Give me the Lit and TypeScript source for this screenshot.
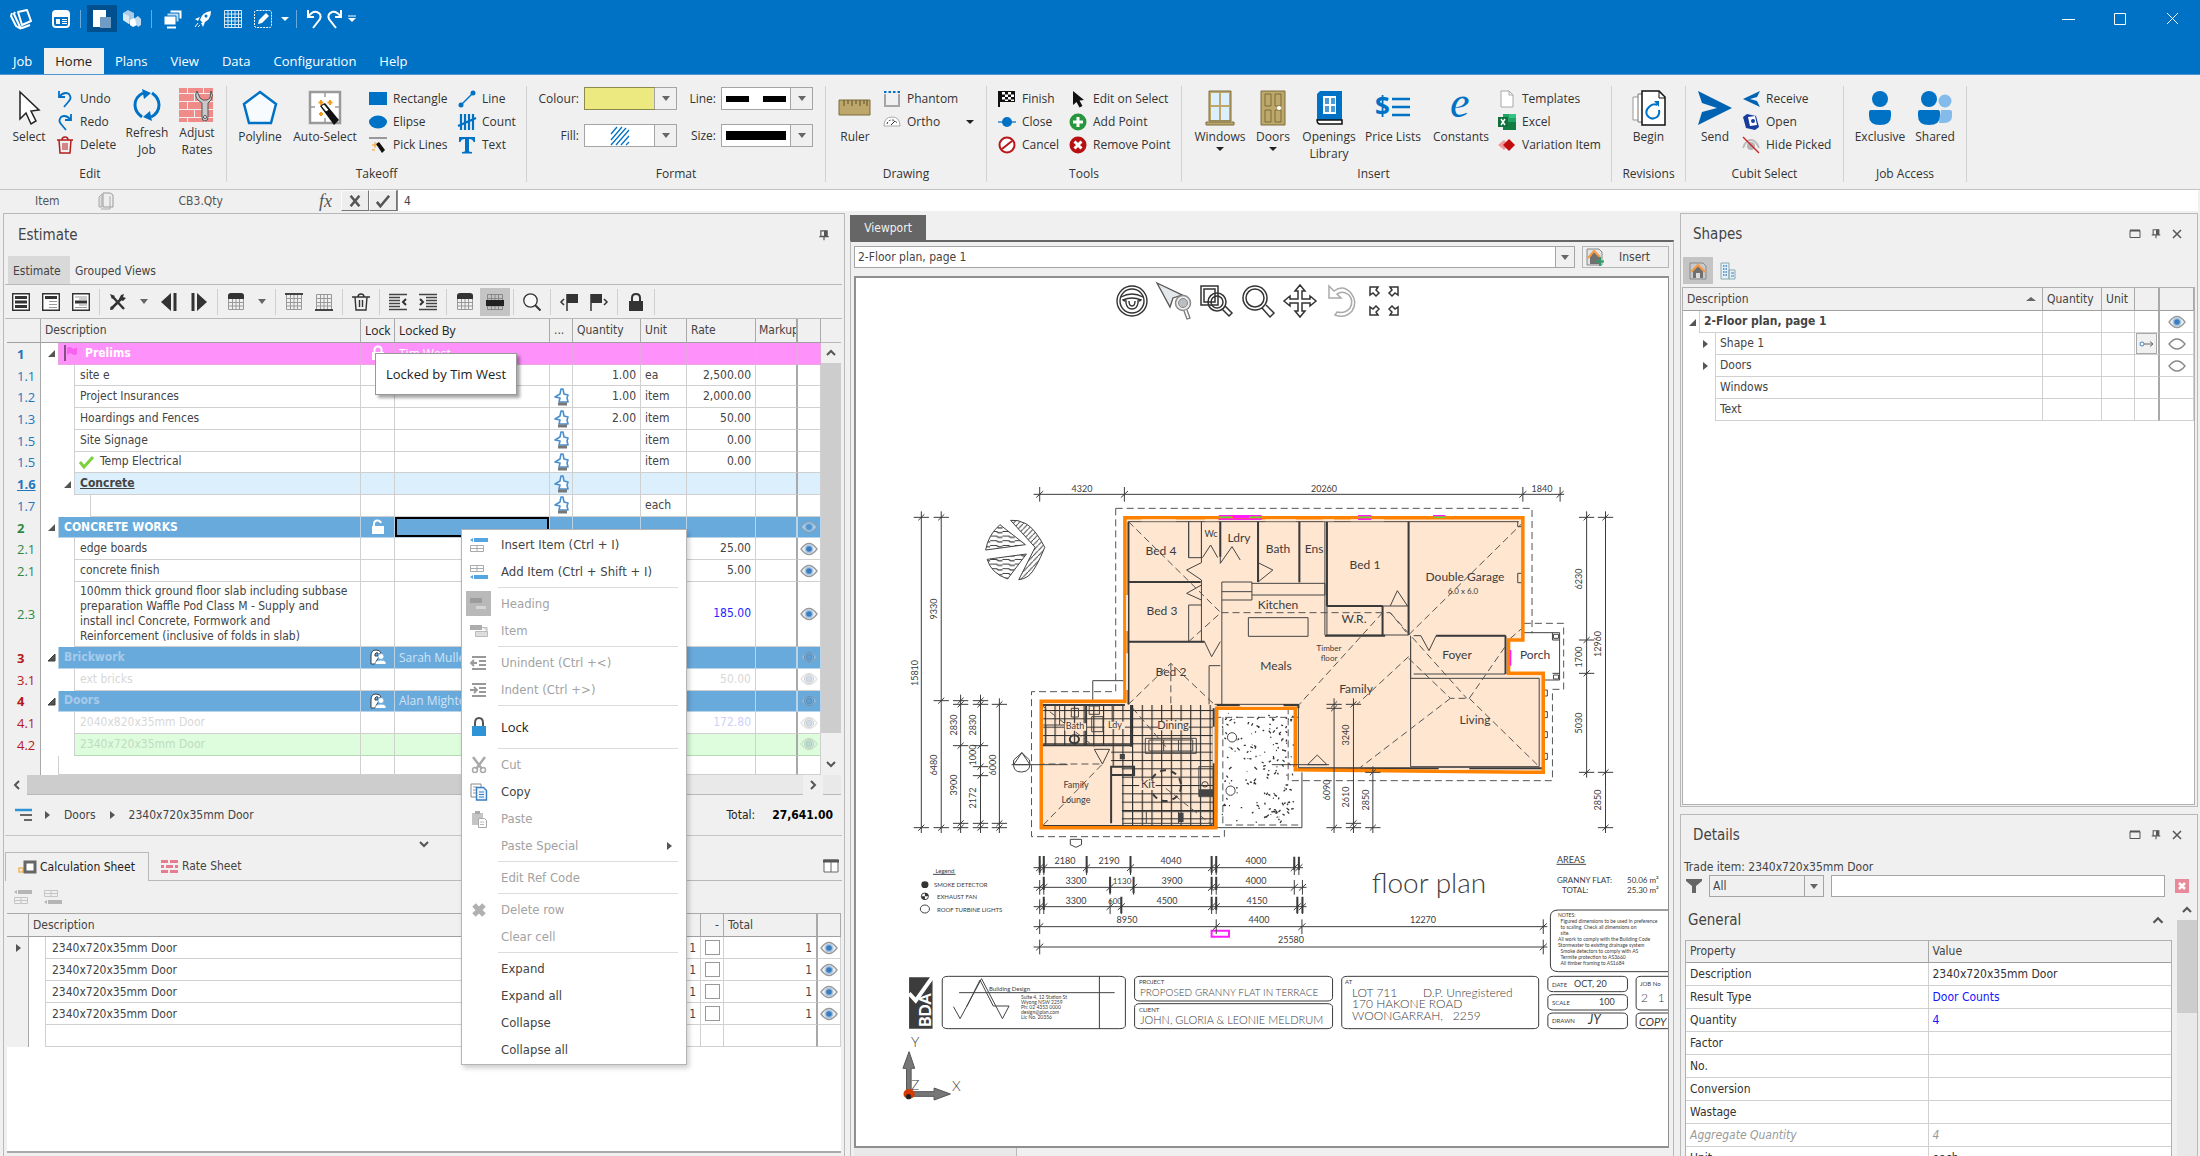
import { LitElement, html, svg, css, nothing } from "lit";
import { customElement } from "lit/decorators.js";

const BLUE = "#0072c6";

/* ---------- icon set: name -> [viewBox width, viewBox height, drawing] ---------- */
const tri = svg`<path d="M0 0h8L4 4z" fill="#222"/>`;
const grid16 = (c: string) => svg`<path d="M1.5 1.5h15v15h-15zM1.5 5.5h15M1.5 9.5h15M1.5 13h15M5.5 1.5v15M9 1.5v15M12.500 1.500v15" fill="none" stroke="${c}"/>`;
const insertRow = (c: string, g: string) => svg`<path d="M0 4l3-2v4zM4 2h14v4H4z" fill="${c}"/><path d="M.5 9.500h13v6H.5zM.5 12.500h13M7 9.500v6" fill="none" stroke="${g}"/>`;
const addRow = (c: string, g: string) => svg`<path d="M0 14l3-2v4zM4 12h14v4H4z" fill="${c}"/><path d="M.5 2.500h13v6H.5zM.5 5.500h13M7 2.500v6" fill="none" stroke="${g}"/>`;
const bricks = (c: string) => svg`<path d="M0 0h8v5H0zM9 0h15v5H9zM25 0h9v5h-9zM0 6h15v7H0zM16 6h18v7H16zM0 14h8v7H0zM9 14h16v7H9zM26 14h8v7h-8zM0 22h15v7H0zM16 22h18v7H16zM0 30h8v4H0zM9 30h16v4H9zM26 30h8v4h-8z" fill="${c}"/>`;
const rateBricks = svg`<path d="M0 0h7v3H0zM9 0h8v3H9zM0 5h3v3H0zM5 5h7v3H5zM14 5h3v3h-3zM0 10h7v3H0zM9 10h8v3H9z" fill="#e77b90"/>`;
const wand = svg`<path d="M13 16l5-3 14 17-5 5z" fill="#111"/><path d="M14 16l3-2 5 6-3 2z" fill="#fff" stroke="#111"/>`;

const ICONS: Record<string, [number, number, unknown]> = {
  logo: [24, 22, svg`<g fill="none" stroke="#fff" stroke-width="2" stroke-linejoin="round"><path d="M9 4l9-2 4 11-9 4z"/><path d="M6 4L5 6l6 13 2 1 8-3M3 5L2 8l5 10 5 3"/></g>`],
  appwin: [18, 18, svg`<rect x="1" y="1" width="16" height="16" rx="3" fill="none" stroke="#fff" stroke-width="2"/><path d="M1 2h16v5H1z" fill="#fff"/><path d="M4 9h4v5H4z" fill="#fff"/><path d="M10 9.500h5M10 11.500h5M10 13.500h5" stroke="#fff"/>`],
  layers: [20, 20, svg`<path d="M1 1h13v17H1z" fill="#fff"/><path d="M8 8h11v11H8z" fill="#6f9cc4"/>`],
  cubes: [20, 20, svg`<path d="M1 4l5-3 6 3v8l-5 3-6-4z" fill="#a9cbe8"/><path d="M1 4l6 3v8l-6-4z" fill="#d7e8f6"/><path d="M8 11l4-2 3 2v5l-4 2-3-2z" fill="#fff"/><path d="M13 9l3-2 3 3v6l-3 2-2-3z" fill="#bfd9ef"/>`],
  stack: [20, 20, svg`<path d="M7 1h12v9H7z" fill="#fff" stroke="#0072c6"/><path d="M4 4h12v9H4z" fill="#bcd8ee" stroke="#0072c6"/><path d="M1 7h12v9H1z" fill="#fff" stroke="#0072c6"/><path d="M4 18.500h9" stroke="#fff" stroke-width="2"/>`],
  rocket: [18, 18, svg`<path d="M6 10Q8 2 17 1q0 9-8 12zM6 7L1 9l3 2zM11 12l-2 5-2-4z" fill="#fff"/><circle cx="12" cy="6" r="1.500" fill="#0072c6"/><path d="M1 17l3-4M4 17l2-2" stroke="#fff"/>`],
  gridw: [18, 18, svg`<path d="M.5.5h17v17H.5zM.5 4h17M.5 7.500h17M.5 11h17M.5 14.500h17M4 .5v17M7.500.5v17M11 .5v17M14.500.5v17" fill="none" stroke="#d9e9f6"/>`],
  pencil: [18, 18, svg`<rect x=".5" y=".5" width="17" height="17" rx="2" fill="none" stroke="#fff" stroke-dasharray="2 1"/><path d="M4 14l1-4 7-7 3 3-7 7z" fill="#fff"/>`],
  undow: [16, 20, svg`<path d="M2 1v7h6M2 8q4-6 9-5 5 2 3 7l-7 9" fill="none" stroke="#fff" stroke-width="2"/>`],
  redow: [16, 20, svg`<path d="M14 1v7H8M14 8Q10 2 5 3 0 5 2 10l7 9" fill="none" stroke="#fff" stroke-width="2"/>`],
  select: [22, 36, svg`<path d="M2 2v27l6-6 5 11 5-3-5-10 8-1z" fill="#fff" stroke="#222" stroke-width="1.500"/>`],
  undo: [18, 18, svg`<path d="M3 1v6h6M3 7q5-6 10-3 3 4 0 7l-5 6" fill="none" stroke="#0072c6" stroke-width="1.800"/>`],
  redo: [18, 18, svg`<path d="M15 1v6H9M15 7Q10 1 5 4q-3 4 0 7l5 6" fill="none" stroke="#0072c6" stroke-width="1.800"/>`],
  del: [18, 18, svg`<path d="M1 4h16M6 4q0-3 3-3t3 3M3 4l1 13h10l1-13" fill="none" stroke="#b51d1d" stroke-width="1.500"/><path d="M7 7v7M9 7v7M11 7v7" stroke="#b51d1d"/>`],
  refresh: [28, 34, svg`<g fill="none" stroke="#0072c6" stroke-width="3"><path d="M10 5Q2 9 2 17q0 7 7 12"/><path d="M18 29q8-4 8-12 0-7-7-12"/></g><path d="M9 1l9 4-7 6zM19 33l-9-4 7-6z" fill="#0072c6"/>`],
  rates: [36, 36, svg`${bricks("#ef8c89")}<path d="M18 3q-3 5 1 9l4 3v14q0 4 3 4t3-4V15l3-3q3-5 0-9l-1 7-3 2h-4l-3-2z" fill="#c8c8c8" stroke="#555"/><circle cx="26" cy="29" r="1.500" fill="#fff" stroke="#555"/>`],
  polyline: [36, 36, svg`<path d="M18 2l16 12-5 19H7L2 14z" fill="#f8fbfe" stroke="#0072c6" stroke-width="2.500"/>`],
  auto: [36, 36, svg`<rect x="3" y="2" width="30" height="31" fill="#fff" stroke="#9a9a9a" stroke-width="2.500"/><path d="M18 2v5M18 33v-5M3 17h5M33 17h-5" stroke="#9a9a9a" stroke-width="1.500"/><path d="M14 10v5M11.500 12.500h5M23 10v5M20.500 12.500h5M14 22v4M12 24h4" stroke="#f59a1c" stroke-width="2"/>${wand}`],
  rect: [18, 18, svg`<path d="M0 2h18v13H0z" fill="#0072c6"/>`],
  ellipse: [18, 18, svg`<ellipse cx="9" cy="9" rx="9" ry="6.500" fill="#0072c6"/>`],
  pick: [18, 18, svg`<path d="M0 2h18" stroke="#999" stroke-width="2"/><path d="M6 6v6M3 9h6M3 14h3" stroke="#f59a1c"/><path d="M7 8l3-2 6 8-3 3z" fill="#111"/>`],
  line: [18, 18, svg`<path d="M3 15L15 3" stroke="#0072c6" stroke-width="1.500"/><circle cx="3" cy="15" r="2.500" fill="#0072c6"/><circle cx="15" cy="3" r="2.500" fill="#0072c6"/>`],
  count: [18, 18, svg`<path d="M3 1v16M7 1v16M11 1v16M15 1v16M0 13L18 5" stroke="#0072c6" stroke-width="2.200"/>`],
  text: [18, 18, svg`<path d="M1 1h16v5h-1.500Q15 3 11 3v12q0 1 3 1v1.500H4V16q3 0 3-1V3Q3 3 2.500 6H1z" fill="#0072c6"/>`],
  ruler: [34, 20, svg`<path d="M1 2h31v15H1z" fill="#bda76a" stroke="#7d6c3c"/><path d="M6 2v6M10 2v4M14 2v6M18 2v4M22 2v6M26 2v4M29 2v6" stroke="#5c4e28"/>`],
  phantom: [18, 18, svg`<path d="M2 4v12h14V4" fill="none" stroke="#a5a5a5" stroke-width="2"/><path d="M1 2h16" stroke="#0072c6" stroke-width="2" stroke-dasharray="2.500 2"/>`],
  ortho: [18, 18, svg`<path d="M1 13Q1 4 9 4t8 9z" fill="#fff" stroke="#aaa"/><path d="M4 11q1-4 5-4t5 4" fill="none" stroke="#333" stroke-dasharray="2 1.500"/><path d="M8 12l4-4" stroke="#333"/>`],
  finish: [18, 18, svg`<path d="M1 1v16" stroke="#111" stroke-width="2"/><path d="M1 1h16v11H1z" fill="#111"/><path d="M4 2h3v2.500H4zM10 2h3v2.500h-3zM7 4.500h3V7H7zM13 4.500h3V7h-3zM4 7h3v2.500H4zM10 7h3v2.500h-3zM7 9.500h3V11H7zM13 9.500h3V11h-3z" fill="#fff"/>`],
  close: [18, 18, svg`<path d="M0 9h18" stroke="#5d9fd6" stroke-width="2"/><circle cx="9" cy="9" r="5" fill="#0072c6"/>`],
  cancel: [18, 18, svg`<circle cx="9" cy="9" r="7.500" fill="#fff" stroke="#bb1518" stroke-width="2"/><path d="M4 13L14 5" stroke="#bb1518" stroke-width="2"/>`],
  editsel: [18, 18, svg`<path d="M4 1v14l3.500-3 3 5.500 3-1.500-3-5.500 4.500-.5z" fill="#111"/>`],
  addpt: [18, 18, svg`<circle cx="9" cy="9" r="8.500" fill="#27963c"/><path d="M9 4v10M4 9h10" stroke="#fff" stroke-width="3"/>`],
  rempt: [18, 18, svg`<circle cx="9" cy="9" r="8.500" fill="#b80f12"/><path d="M5.500 5.500l7 7M12.500 5.500l-7 7" stroke="#fff" stroke-width="3"/>`],
  windows: [30, 36, svg`<path d="M4 1h22v30H4z" fill="#bda76a" stroke="#7d6c3c"/><path d="M6 3h8v12H6zM16 3h8v12h-8zM6 17h8v13H6zM16 17h8v13h-8z" fill="#dcefff"/><path d="M1 32h28v3H1z" fill="#bda76a" stroke="#7d6c3c"/>`],
  doors: [30, 36, svg`<path d="M3 1h24v34H3z" fill="#bda76a" stroke="#7d6c3c"/><path d="M7 4h6v12H7zM17 4h6v12h-6zM7 20h6v12H7zM17 20h6v12h-6z" fill="none" stroke="#7d6c3c"/><circle cx="21" cy="18" r="2" fill="#fff"/>`],
  library: [30, 36, svg`<path d="M6 1h22v29H3V4z" fill="#0072c6"/><path d="M3 30h25v4H5q-2-1-2-4z" fill="#fff" stroke="#111" stroke-width="1.500"/><path d="M9 6h13v18H9z" fill="#fff"/><path d="M11 8h4v6h-4zM17 8h4v6h-4zM11 16h4v6h-4zM17 16h4v6h-4z" fill="#4b9bd8"/>`],
  prices: [36, 30, svg`<text x="0" y="23" font-family="Open Sans, sans-serif" font-weight="700" font-size="26" fill="${BLUE}">$</text><path d="M17 6h18M17 14h18M17 22h18" stroke="#0072c6" stroke-width="2.500"/>`],
  consts: [30, 34, svg`<text x="4" y="26" font-family="Liberation Serif, serif" font-style="italic" font-size="44" fill="${BLUE}">e</text>`],
  page: [18, 18, svg`<path d="M3 1h8l4 4v12H3z" fill="#fff" stroke="#a8a8a8"/><path d="M11 1v4h4" fill="none" stroke="#a8a8a8"/>`],
  excel: [18, 18, svg`<path d="M5 1h13v16H5z" fill="#21a366"/><path d="M5 9h13v8H5z" fill="#107c41"/><path d="M11 1h7v4h-7z" fill="#33c481"/><path d="M0 4h10v10H0z" fill="#0f703b"/><path d="M3 6l4 6M7 6l-4 6" stroke="#fff" stroke-width="1.500"/>`],
  variation: [18, 18, svg`<path d="M6 4l5 5-5 5-6-5z" fill="#f29a9a"/><path d="M11 3l6 6-6 6-6-6z" fill="#c00d0d"/>`],
  begin: [36, 36, svg`<path d="M4 7h12v23H2V7z" fill="#fff" stroke="#999"/><path d="M7 4h12v28H7z" fill="#fff" stroke="#777"/><path d="M11 1h17l6 6v28H11z" fill="#fff" stroke="#111" stroke-width="1.500"/><path d="M28 1v7h6" fill="none" stroke="#111"/><path d="M26 15q-4-2-8 2t-2 8q4 6 10 2 3-3 2-7" fill="none" stroke="#0072c6" stroke-width="2"/><path d="M23 11h5v6z" fill="#0072c6"/>`],
  send: [36, 36, svg`<path d="M1 1l34 17L1 35l4-13 15-4L5 13z" fill="#0062b2"/>`],
  receive: [18, 18, svg`<path d="M18 1L1 9l17 8-3-6-7-2 7-2z" fill="#0062b2"/>`],
  open: [18, 18, svg`<path d="M1 4l3 11 9 2 4-3-3-11-9-2z" fill="#173c9c"/><path d="M6 4l7-1 2 9-7 1z" fill="#fff"/><circle cx="11" cy="8" r="2" fill="#173c9c"/>`],
  hide: [18, 18, svg`<path d="M1 12q3-8 8-8t8 8" fill="none" stroke="#bbb" stroke-width="2"/><circle cx="9" cy="10" r="4" fill="#b5b5b5"/><path d="M1 1l16 16" stroke="#c9252b" stroke-width="1.500"/>`],
  person: [24, 36, svg`<circle cx="12" cy="9" r="8" fill="#0072c6"/><path d="M1 22q0-2 2-2h18q2 0 2 2v4q0 9-11 9T1 26z" fill="#0072c6"/>`],
  people: [36, 36, svg`<circle cx="28" cy="11" r="6.500" fill="#84bbea"/><path d="M24 20h9q2 0 2 2v4q0 7-8 7h-5z" fill="#84bbea"/><circle cx="12" cy="9" r="8" fill="#0072c6"/><path d="M1 22q0-2 2-2h18q2 0 2 2v4q0 9-11 9T1 26z" fill="#0072c6"/>`],
  copies: [16, 18, svg`<path d="M5 1h7l3 2v12H5z" fill="#eee" stroke="#999"/><path d="M1 5l3-3v13H1z" fill="#ddd" stroke="#aaa"/><path d="M3 17h9V4" fill="none" stroke="#aaa"/>`],
  xbig: [16, 16, svg`<path d="M3 2l10 12M13 2L3 14" stroke="#555" stroke-width="3"/>`],
  tick: [16, 16, svg`<path d="M1 9l4 5L15 2" fill="none" stroke="#555" stroke-width="3"/>`],
  gtick: [14, 14, svg`<path d="M0 7l4 5 9-10" fill="none" stroke="#7bd13c" stroke-width="3"/>`],
  pin: [12, 14, svg`<path d="M2 1h8v7H2zM0 8.500h12M6 8v5" fill="none" stroke="#555" stroke-width="1.500"/><path d="M6 1h4v7H6z" fill="#555"/>`],
  maxw: [12, 12, svg`<path d="M1 2.500h10v7H1z" fill="none" stroke="#555"/><path d="M1 2.500h10" stroke="#555" stroke-width="2"/>`],
  xw: [12, 12, svg`<path d="M2 2l8 8M10 2l-8 8" stroke="#555" stroke-width="1.500"/>`],
  list1: [18, 18, svg`<path d="M.7.7h16.600v16.600H.7z" fill="#fff" stroke="#333" stroke-width="1.400"/><path d="M3 4.500h12M3 9h12M3 13.500h12" stroke="#333" stroke-width="3"/>`],
  list2: [18, 18, svg`<path d="M.7.7h16.600v16.600H.7z" fill="#fff" stroke="#333" stroke-width="1.400"/><path d="M3 4.500h12" stroke="#333" stroke-width="3"/><path d="M7 8.500h8M7 11.500h8M7 14.500h8" stroke="#999"/>`],
  list3: [18, 18, svg`<path d="M.7.7h16.600v16.600H.7z" fill="#fff" stroke="#333" stroke-width="1.400"/><path d="M3 9h12" stroke="#333" stroke-width="3"/><path d="M3 4h12M7 6h8M7 12h8M3 14.500h12" stroke="#999"/>`],
  tools: [18, 18, svg`<path d="M3 3l12 13M2 16L13 5" stroke="#333" stroke-width="2.500"/><path d="M1 1l5 2-3 3zM12 2l3-1-1 3 3 1-3 3-4-2zM1 17l4-1-3-3z" fill="#333"/>`],
  prev: [18, 18, svg`<path d="M11 0v18L1 9z" fill="#333"/><path d="M15 0v18" stroke="#333" stroke-width="3"/>`],
  next: [18, 18, svg`<path d="M7 0v18L17 9z" fill="#333"/><path d="M3 0v18" stroke="#333" stroke-width="3"/>`],
  tbltop: [18, 18, svg`${grid16("#999")}<path d="M1 6V3q0-3 3-3h10q3 0 3 3v3z" fill="#333"/>`],
  tblhead: [18, 18, svg`${grid16("#999")}<path d="M0 1h18" stroke="#444" stroke-width="2"/>`],
  tblfoot: [18, 18, svg`${grid16("#999")}<path d="M0 17h18" stroke="#444" stroke-width="2"/>`],
  tblmid: [18, 18, svg`${grid16("#888")}<path d="M0 7h18v6H0z" fill="#222"/>`],
  trash: [18, 18, svg`<path d="M0 4h18M6 4q0-3 3-3t3 3M3 4l1 13h10l1-13M7.500 7v7M10.500 7v7" fill="none" stroke="#333" stroke-width="1.400"/>`],
  outd: [18, 18, svg`<path d="M0 1.500h18M0 4.500h11M0 7.500h11M0 10.500h11M0 13.500h11M0 16.500h18" stroke="#444" stroke-width="1.400"/><path d="M17 6l-3 3 3 3" fill="none" stroke="#333" stroke-width="2"/>`],
  ind: [18, 18, svg`<path d="M0 1.500h18M7 4.500h11M7 7.500h11M7 10.500h11M7 13.500h11M0 16.500h18" stroke="#444" stroke-width="1.400"/><path d="M1 6l3 3-3 3" fill="none" stroke="#333" stroke-width="2"/>`],
  search: [18, 18, svg`<circle cx="7.500" cy="7.500" r="6.700" fill="#f8f8f8" stroke="#333" stroke-width="1.300"/><path d="M12 12l5.500 5.500" stroke="#333" stroke-width="2"/>`],
  flagp: [18, 18, svg`<path d="M7 1v17" stroke="#333" stroke-width="1.500"/><path d="M7 1h11v9H7z" fill="#333"/><path d="M4 6L1 9l3 3" fill="none" stroke="#333" stroke-width="1.500"/>`],
  flagn: [18, 18, svg`<path d="M1 1v17" stroke="#333" stroke-width="1.500"/><path d="M1 1h11v9H1z" fill="#333"/><path d="M14 6l3 3-3 3" fill="none" stroke="#333" stroke-width="1.500"/>`],
  lock: [18, 18, svg`<path d="M2 8h14v10H2z" fill="#333"/><path d="M5 8V5q0-4 4-4t4 4v3" fill="none" stroke="#333" stroke-width="2"/>`],
  lockw: [14, 16, svg`<path d="M1 7h12v8H1z" fill="#fff"/><path d="M3.500 7V5q0-3.500 3.500-3.500T10.500 5v2" fill="none" stroke="#fff" stroke-width="2"/>`],
  openw: [14, 16, svg`<path d="M1 7h12v8H1z" fill="#fff"/><path d="M3 7V5q0-3.500 3.500-3.500Q9 1.500 10 4" fill="none" stroke="#fff" stroke-width="2"/>`],
  userw: [16, 16, svg`<path d="M1 7q0-6 5-6 4 0 5 3l-2 1v3l-2 3-2 4H1z" fill="#fff"/><path d="M5 7V5q1-2 3-1v3z" fill="#69aadd"/><circle cx="11" cy="7.500" r="3" fill="#fff" stroke="#69aadd"/><path d="M5 15.500q0-4.500 6-4.500t5 4.500z" fill="#fff" stroke="#69aadd"/>`],
  flag: [15, 16, svg`<path d="M1 0v16" stroke="#8a4a86" stroke-width="2"/><path d="M3 3q3-2 5 0t5-1v7q-3 2-5 0t-5 1z" fill="#f763f0"/>`],
  hand: [16, 18, svg`<path d="M6 14l1-4-5-1 5-3 1-5h2l1 5 4 1-1 3 1 4z" fill="#fff" stroke="#4a8fd0" stroke-width="1.600" stroke-linejoin="round"/><path d="M5 16h9" stroke="#777" stroke-width="3"/>`],
  eye: [18, 14, svg`<path d="M1 7q8-11 16 0-8 11-16 0z" fill="#f4f4f4" stroke="#999" stroke-width="1.300"/><circle cx="9" cy="7" r="4.500" fill="#a6c6e4"/><circle cx="9" cy="7" r="2.800" fill="#3b7cbf"/>`],
  oval: [18, 14, svg`<path d="M1 7q8-10 16 0-8 10-16 0z" fill="#fff" stroke="#888" stroke-width="1.300"/>`],
  tree: [18, 14, svg`<path d="M0 2h17" stroke="#2f93d8" stroke-width="2.500"/><path d="M5 7h12M9 12h8" stroke="#666" stroke-width="2"/>`],
  calc: [18, 14, svg`<path d="M1 8h4v4H1z" fill="none" stroke="#f0b55c" stroke-width="1.500"/><path d="M7 2h10v10H7z" fill="#fff" stroke="#666" stroke-width="3"/>`],
  rate: [17, 13, rateBricks],
  cols: [16, 14, svg`<path d="M1 1h14v12H1zM8 1v12" fill="#fff" stroke="#666"/><path d="M0 2h16" stroke="#555" stroke-width="3"/>`],
  insrow: [18, 18, insertRow("#55a5e3", "#aaa")],
  addrow: [18, 18, addRow("#55a5e3", "#aaa")],
  insrowg: [18, 18, insertRow("#b5b5b5", "#c5c5c5")],
  addrowg: [18, 18, addRow("#b5b5b5", "#c5c5c5")],
  heading: [18, 18, svg`<path d="M0 3h12v5H0z" fill="#9c9c9c"/><path d="M6 11h10v3H6z" fill="#d5d5d5"/>`],
  item: [18, 18, svg`<path d="M0 3h12v5H0z" fill="#adadad"/><path d="M5.500 9.500h12v5h-12zM12 5.500h5v4" fill="#ddd" stroke="#bbb"/>`],
  mout: [18, 18, svg`<path d="M2 3h14M9 7h7M9 11h7M2 15h14M1 9h6M4 6L1 9l3 3" fill="none" stroke="#999" stroke-width="1.800"/>`],
  min: [18, 18, svg`<path d="M2 3h14M9 7h7M9 11h7M2 15h14M0 9h6M4 6l3 3-3 3" fill="none" stroke="#999" stroke-width="1.800"/>`],
  block: [16, 20, svg`<path d="M1 9h14v10H1z" fill="#2f93d8"/><path d="M4 9V6q0-5 4-5t4 5v3" fill="none" stroke="#555" stroke-width="2"/>`],
  cut: [18, 18, svg`<path d="M3 1l9 12M15 1L6 13" stroke="#aaa" stroke-width="2.500"/><circle cx="5" cy="14" r="2.500" fill="none" stroke="#aaa" stroke-width="1.500"/><circle cx="13" cy="14" r="2.500" fill="none" stroke="#aaa" stroke-width="1.500"/>`],
  copy: [18, 18, svg`<path d="M1 1h10v13H1z" fill="#fff" stroke="#888"/><path d="M3 4h4M3 7h4M3 10h4" stroke="#999"/><path d="M6.500 4.500h7l3 3v9.500h-10z" fill="#eaf3fb" stroke="#3a7fc0" stroke-width="1.400"/><path d="M9 9h5M9 11.500h5M9 14h5" stroke="#3a7fc0"/>`],
  paste: [18, 18, svg`<path d="M2 3h11v12H2z" fill="#c5c5c5"/><path d="M5 1h5v3H5z" fill="#aaa"/><path d="M8.500 8.500h6l2 2v7h-8z" fill="#fff" stroke="#aaa"/><path d="M10 12h4M10 14.500h4" stroke="#bbb"/>`],
  delx: [16, 16, svg`<path d="M3 3l10 10M13 3L3 13" stroke="#b0b0b0" stroke-width="5"/>`],
  house: [18, 18, svg`<path d="M1 1h13l3 3v13H1z" fill="#c9c9c9" stroke="#888"/><path d="M4 9l5-5 5 5v7H4z" fill="#707070"/><path d="M2 10l7-7 7 7" fill="none" stroke="#f39a45" stroke-width="2"/><path d="M7 11h4v5H7z" fill="#ddd"/>`],
  houseadd: [18, 18, svg`<path d="M1 1h12l3 3v13H1z" fill="#e3e3e3" stroke="#888"/><path d="M4 9l4-5 5 5v7H4z" fill="#707070"/><path d="M2 10l6-7 6 6" fill="none" stroke="#f39a45" stroke-width="2"/><path d="M14 9v9M9 13.500h9" stroke="#2f9a6a" stroke-width="2"/>`],
  build: [16, 18, svg`<path d="M1 1h8v16H1zM9 8h6v9H9z" fill="#e7f0f8" stroke="#8aa"/><path d="M3 4h4M3 7h4M3 10h4M3 13h4" stroke="#3a7fc0" stroke-width="1.500" stroke-dasharray="1.500 1"/><path d="M11 11h3M11 14h3" stroke="#3a7fc0"/>`],
  link: [16, 10, svg`<circle cx="3" cy="5" r="2" fill="#fff" stroke="#3a7fc0"/><path d="M5 5h9M11 2.500L14 5l-3 2.500" fill="none" stroke="#666"/>`],
  filter: [16, 16, svg`<path d="M0 1h16v2l-6 5v7H6V8L0 3z" fill="#666"/>`],
  redx: [14, 14, svg`<path d="M0 0h14v14H0z" fill="#e88a99"/><path d="M4 4l6 6M10 4l-6 6" stroke="#fff" stroke-width="2.500"/>`],
  up: [10, 8, svg`<path d="M1 6l4-4 4 4" fill="none" stroke="#555" stroke-width="2"/>`],
  down: [10, 8, svg`<path d="M1 2l4 4 4-4" fill="none" stroke="#555" stroke-width="2"/>`],
  left: [8, 10, svg`<path d="M6 1L2 5l4 4" fill="none" stroke="#555" stroke-width="2"/>`],
  right: [8, 10, svg`<path d="M2 1l4 4-4 4" fill="none" stroke="#555" stroke-width="2"/>`],
  caret: [8, 4, tri],
  caretg: [8, 5, svg`<path d="M0 0h8L4 5z" fill="#666"/>`],
  caretw: [8, 4, svg`<path d="M0 0h8L4 4z" fill="#fff"/>`],
  caretq: [8, 8, svg`<path d="M0 1h8" stroke="#fff"/><path d="M0 3h8L4 7z" fill="#fff"/>`],
  play: [5, 8, svg`<path d="M0 0l5 4-5 4z" fill="#555"/>`],
  branch: [9, 8, svg`<path d="M0 0l5 4-5 4z" fill="#555"/>`],
  corner: [7, 7, svg`<path d="M7 0v7H0z" fill="#555"/>`],
  sort: [10, 4, svg`<path d="M0 4h10L5 0z" fill="#666"/>`],
  hatch: [18, 18, svg`<path d="M0 7l6-7M0 13L11 0M0 18L15 1M5 18L18 3M10 18l8-9M15 18l3-3" stroke="#0072c6" stroke-width="1.300"/>`],
  wmin: [13, 13, svg`<path d="M0 7.500h13" stroke="#fff"/>`],
  wmax: [13, 13, svg`<path d="M.5 1.500h11v11H.5z" stroke="#fff" fill="none"/>`],
  wclose: [13, 13, svg`<path d="M1 1l11 11M12 1L1 12" stroke="#fff"/>`],
  orbit: [32, 32, svg`<g fill="#fff" stroke="#333" stroke-width="1.400"><circle cx="16" cy="16" r="15"/><circle cx="16" cy="16" r="12"/><path d="M5 12q11-6 22 0" fill="none"/><path d="M7 15q9-4 18 0-1 1-3 1v2q-1 6-6 6t-6-6v-2q-2 0-3-1z"/><path d="M13 16q0 5 3 5t3-5" fill="none"/></g>`],
  pickzoom: [38, 38, svg`<path d="M2 1l25 12-9 3-3 9z" fill="#e4e8ea" stroke="#555" stroke-width="1.300"/><circle cx="28" cy="21" r="7.500" fill="#eee" stroke="#888" stroke-width="1.500"/><circle cx="28" cy="21" r="4.500" fill="#b9bec2" stroke="#888"/><path d="M29 29l3 8 3-1-3-8" fill="#fff" stroke="#777" stroke-width="1.300"/>`],
  zoomwin: [34, 34, svg`<g fill="none" stroke="#333" stroke-width="1.500"><path d="M2 2h17v19H2zM5 5h11v13H5z"/><circle cx="18" cy="18" r="9"/><circle cx="18" cy="18" r="6"/><path d="M23 25l7 7 3-3-7-7"/></g>`],
  zoom: [34, 34, svg`<g fill="none" stroke="#333" stroke-width="1.500"><circle cx="14" cy="14" r="12"/><circle cx="14" cy="14" r="9"/><path d="M21 24l8 9 4-4-8-8"/></g>`],
  pan: [34, 34, svg`<path d="M17 1l5 6h-3v8h8v-3l6 5-6 5v-3h-8v8h3l-5 6-5-6h3v-8H7v3l-6-5 6-5v3h8V7h-3z" fill="#fff" stroke="#333" stroke-width="1.500"/>`],
  rotate: [32, 34, svg`<path d="M3 2v12h12l-4-4q6-4 12 1 5 6 1 13-5 6-13 4l-2 3q10 4 17-4 6-9-1-18Q17 0 8 7z" fill="#fff" stroke="#aaa" stroke-width="1.500"/>`],
  extents: [32, 32, svg`<g fill="#fff" stroke="#333" stroke-width="1.500"><path d="M2 2h8L8 5l3 3-3 3-3-3-3 2z"/><path d="M30 2h-8l2 3-3 3 3 3 3-3 3 2z"/><path d="M2 30h8l-2-3 3-3-3-3-3 3-3-2z"/><path d="M30 30h-8l2-3-3-3 3-3 3 3 3-2z"/></g>`],
};

const ic = (name: string, w?: number, h?: number) => {
  const [vw, vh, body] = ICONS[name];
  return html`<svg class="ic" width=${w ?? vw} height=${h ?? vh} viewBox="0 0 ${vw} ${vh}" aria-hidden="true">${body}</svg>`;
};

/* ---------- floor plan drawing ----------
   Line work is drawn in survey units; PX/PY convert a survey point to canvas pixels for lettering. */
const SX = 0.5102;
const SY = 1 / 3;
const OX = 24;
const OY = 182;
const PX = (x: number) => Math.round(x * SX + OX);
const PY = (y: number) => Math.round(y * SY + OY);

const txt = (x: number, y: number, s: string, cls = "t12") =>
  svg`<text class=${cls} x=${PX(x)} y=${PY(y)} text-anchor="middle">${s}</text>`;
const txtL = (x: number, y: number, s: string, cls = "t12") =>
  svg`<text class=${cls} x=${PX(x)} y=${PY(y)}>${s}</text>`;
const vtxt = (x: number, y: number, s: string) =>
  svg`<text class="t10" transform="translate(${PX(x)} ${PY(y)}) rotate(-90)" text-anchor="middle">${s}</text>`;

const hdim = (y: number, xs: number[], up = 22, dn = 22) =>
  `M${xs[0] - 12} ${y}H${xs[xs.length - 1] + 8}` + xs.map((x) => `M${x} ${y - up}V${y + dn}M${x - 7} ${y + 10}L${x + 7} ${y - 10}`).join("");
const vdim = (x: number, ys: number[]) =>
  `M${x} ${ys[0] - 18}V${ys[ys.length - 1] + 16}` + ys.map((y) => `M${x - 15} ${y}H${x + 15}M${x - 6} ${y + 9}L${x + 6} ${y - 9}`).join("");

const speckles = () => {
  let seed = 7;
  const rnd = () => (seed = (seed * 16807) % 2147483647) / 2147483647;
  let d = "";
  for (let i = 0; i < 170; i++) {
    const x = Math.round(672 + rnd() * 142);
    const y = Math.round(760 + rnd() * 330);
    d += `M${x} ${y}l${Math.round(rnd() * 10 - 5)} ${Math.round(rnd() * 12 - 4)}`;
  }
  return d;
};

const plan = svg`
  <defs>
    <pattern id="tiles" width="19" height="25" patternUnits="userSpaceOnUse"><path d="M0 1H19" stroke="#2b2b2b" stroke-width="4" fill="none"/><path d="M1 0V25" stroke="#2b2b2b" stroke-width="2.500" fill="none"/></pattern>
    <pattern id="wave" width="24" height="14" patternUnits="userSpaceOnUse"><path d="M0 4h12l4 4h8" stroke="#333" stroke-width="3" fill="none"/></pattern>
    <pattern id="diag" width="10" height="16" patternUnits="userSpaceOnUse"><path d="M0 16L10 0" stroke="#333" stroke-width="2" fill="none"/></pattern>
  </defs>
  <g class="lines" transform="translate(${OX} ${OY}) scale(${SX} ${SY})">
    <path class="room" d="M480 173H1260V540H1232V640H1300V937L814 929V745H660L658 1103H316V724H480Z"/>
    <path d="M320 735h170v120H320zM474 735h180v365H474zM453 855h25v65h-25z" fill="url(#tiles)"/>
    <path class="med" d="M487 185H1252M487 185V733M605 185V293H630M630 185V308M667 185V310M741 185V366M822 185V368M876 185V438M1036 185V525M487 366H630V360M630 366V545M605 545V435H630M487 545H636M670 366V733M670 366H729V420H670M670 395H729M729 370H872V405H729M872 185V525M876 438H1036M876 438V525H985V438M985 525H1036M1090 527H1226V642M1046 527H1060M1040 545V920H1292V655H1040M1046 642H1226M820 930V733H656M645 733V617H667M722 473H839V529H722ZM1040 527V655"/>
    <path class="heavy" d="M318 735H480M404 735V856M318 856H492M492 735V860M320 1098H656M654 745V1098M453 945H498V920H453ZM453 945V1090M820 925H1298M660 735H705M790 735H820V745M667 185V290M741 185V366M822 185V366M876 185V438M487 185V733M487 366H628M487 545H636M876 438H985M985 438V525M1036 185V525M872 527H990M1090 527H1226M1226 527V642"/>
    <path class="thin" d="M417 724V662H480M630 308L601 330L630 360M741 308L770 330L741 366M630 375L601 400L630 420M636 545L650 590L667 545M667 310L690 260L706 300M632 293L648 255L662 293M1000 438L1014 392L1034 438M1060 527L1076 572L1090 527M420 868L436 912L450 868ZM630 185V295M605 185V293M1262 518H1332V660H1302M1318 518V540H1332M1318 640H1332M1320 523h10v12h-10zM1320 645h10v12h-10z"/>
    <path class="thin" d="M660 745V1103H827V937M675 745H810M1250 185V200H1258M1258 340H1250V368H1258M1300 690h8v18h-8M1300 755h8v18h-8M1300 815h8v18h-8M1300 880h8v18h-8M625 920h28v90h-28zM475 1055h180v35H475M522 1055v35M552 1055v35M585 1055v35"/>
    <path class="dash" d="M462 145H1278V520M462 145V695H297V1130H675V1100M1262 490H1340V688H1318V962H800V745M487 185L668 458M605 545L668 458H1000L1036 525L1262 185M985 458L822 733M1036 590L935 733M1000 458L1150 715M487 733L570 610L655 733M570 610V733M1036 595L1118 715H1155L1232 545M1155 715L1292 920M1118 715L935 930M320 1095L436 912H316M316 735L420 860M655 1100L560 985M560 860L490 735M1262 500L1232 540M655 772H820M672 772V1095H822"/>
    <path class="thin" d="M520 835h100v45H520zM527 840h86v33h-86zM556 840v33M585 840v33M410 738h20v25h-20zM320 795h85M352 738v56M325 850v-55M375 745h14v26h-14zM455 735v55M415 770h22v45h-22z"/>
    <ellipse class="heavy" cx="560" cy="977" rx="30" ry="46" fill="none" stroke-dasharray="6 5"/>
    <path d="M625 988h28v20h-28zM470 882h10v16h-10zM585 1058h10v28h-10z" fill="#444" stroke="none"/>
    <ellipse class="thin" cx="637" cy="973" rx="6" ry="8" fill="none"/>
    <ellipse class="heavy" cx="381" cy="838" rx="9" ry="12" fill="none"/>
    <path d="M545 783h60v28h-60zM362 790h42v22h-42zM440 785h40v22h-40zM508 962h32v28h-32z" fill="#ffe6d0" stroke="none"/>
    <path class="spk" d=${speckles()}/>
    <ellipse class="thin" cx="690" cy="832" rx="9" ry="14" fill="#fff"/><ellipse class="thin" cx="687" cy="992" rx="9" ry="14" fill="#fff"/>
    <path class="out" d="M480 173H1260V540H1232V640H1300V937L814 929V745H660L658 1103H316V724H480Z"/>
    <path class="win" d="M512 181h68M637 181h25M755 181h60M868 181h22M922 181h66M1095 927h60M707 738h84M355 1092h62M484 405v108M484 580v110M654 800v110"/>
    <path class="mag" d="M664 167H748M664 178H748M692 172h32M937 167h26M937 178h26M1084 167h24M1236 570V617"/>
    <path class="grn" d="M664 172h26M724 172h24M938 172h24M1086 172h22"/>
    <path class="mag2" d="M650 1412H684V1430H650Z"/>

    <path class="thin" fill="url(#wave)" d="M235 194L285 254L207 270Q212 225 235 194ZM210 298L287 282L250 357Q218 340 210 298Z"/>
    <path class="thin" fill="url(#diag)" d="M256 181Q270 178 286 191Q304 206 323 262Q305 330 291 348Q282 358 272 359L304 262Z"/>
    <path class="thin" d="M258 914H368M278 878L262 914H294ZM278 878L293 900Q298 934 278 936T262 900ZM768 914H880M857 885L838 914H876ZM373 1138h22v16l-11 8-11-8z" fill="none"/>

    <path class="dim" d="${hdim(103, [313, 479, 1260, 1333])}${hdim(1223, [313, 321, 405, 491, 650, 659, 812, 821])}${hdim(1282, [313, 321, 451, 497, 650, 659, 812, 828])}${hdim(1340, [313, 321, 451, 473, 650, 659, 818, 828])}${hdim(1400, [313, 659, 827, 1300])}${hdim(1461, [313, 1300])}"/>
    <path class="dim" d="${vdim(81, [172, 1103])}${vdim(120, [172, 722, 1103])}${vdim(158, [722, 733, 857, 1090, 1103])}${vdim(197, [722, 733, 857, 920, 947, 1090, 1103])}${vdim(234, [733, 1090, 1103])}${vdim(1385, [172, 540, 640, 937])}${vdim(1422, [172, 937, 1103])}${vdim(890, [733, 745, 1103])}${vdim(928, [733, 1090, 1103])}${vdim(966, [937, 1103])}"/>
    <path class="heavy" d="M313 1188v50M321 1188v50M405 1188v50M491 1188v50M650 1188v50M659 1188v50M451 1250v50M497 1250v50M473 1310v50M818 1310v50M828 1310v50M821 1190v40M812 1190v40M321 1250v40M650 1250v40M659 1250v40M321 1310v40M650 1310v40M659 1310v40"/>

    <path class="box" d="M134 1549H470Q481 1549 481 1560V1695Q481 1706 470 1706H134Q122 1706 122 1695V1560Q122 1549 134 1549ZM430 1549V1706"/>
    <path class="box" d="M510 1549H876Q887 1549 887 1560V1612Q887 1623 876 1623H510Q499 1623 499 1612V1560Q499 1549 510 1549ZM510 1631H876Q887 1631 887 1642V1695Q887 1706 876 1706H510Q499 1706 499 1695V1642Q499 1631 510 1631Z"/>
    <path class="box" d="M916 1549H1280Q1291 1549 1291 1560V1695Q1291 1706 1280 1706H916Q905 1706 905 1695V1560Q905 1549 916 1549Z"/>
    <path class="box" d="M1320 1549H1455Q1465 1549 1465 1560V1584Q1465 1595 1455 1595H1320Q1309 1595 1309 1584V1560Q1309 1549 1320 1549ZM1320 1604H1455Q1465 1604 1465 1615V1639Q1465 1650 1455 1650H1320Q1309 1650 1309 1639V1615Q1309 1604 1320 1604ZM1320 1659H1455Q1465 1659 1465 1670V1695Q1465 1706 1455 1706H1320Q1309 1706 1309 1695V1670Q1309 1659 1320 1659Z"/>
    <path class="box" d="M1560 1549H1492Q1482 1549 1482 1560V1640Q1482 1650 1492 1650H1560M1560 1659H1492Q1482 1659 1482 1670V1695Q1482 1706 1492 1706H1560M1560 1350H1330Q1314 1350 1314 1370V1515Q1314 1535 1330 1535H1560"/>
    <path class="thin" d="M144 1640L157 1676L199 1556L240 1676L253 1638H222L196 1560L170 1640" fill="none"/>
    <path class="med" d="M155 1598H460M104 1243H148M1326 1213H1384"/>
    <path d="M57 1552H103V1706H57Z" fill="#3c3c3c" stroke="none"/>
    <path d="M57 1600L70 1622L108 1540" stroke="#fff" stroke-width="4" fill="none"/>
    <ellipse cx="88" cy="1274" rx="7" ry="10" fill="#333"/><ellipse class="thin" cx="88" cy="1309" rx="7" ry="10" fill="#fff"/><path d="M88 1299v10h7q0-9-7-10zM88 1309v10q-7-1-7-10z" fill="#333" stroke="none"/><ellipse class="thin" cx="88" cy="1347" rx="9" ry="12" fill="#fff"/>
    <path d="M52 1900V1825L45 1825L57 1775L68 1825H61V1900ZM60 1895H106V1884L138 1902L106 1920V1909H60Z" fill="#777" stroke="#555"/>
    <ellipse cx="57" cy="1902" rx="11" ry="15" fill="#d83a00"/><ellipse cx="56" cy="1910" rx="5" ry="8" fill="#222"/>
  </g>
  ${txt(396, 95, "4320", "t10")}${txt(870, 95, "20260", "t10")}${txt(1297, 95, "1840", "t10")}
  ${txt(551, 284, "Bed 4")}${txt(648, 232, "Wc", "t10")}${txt(704, 246, "Ldry")}${txt(781, 280, "Bath")}${txt(850, 280, "Ens")}${txt(951, 326, "Bed 1")}
  ${txt(1146, 364, "Double Garage")}${txt(1142, 402, "6.0 x 6.0", "t9")}${txt(553, 465, "Bed 3")}${txt(780, 448, "Kitchen")}${txt(930, 490, "W.R.")}
  ${txt(570, 648, "Bed 2")}${txt(776, 630, "Meals")}${txt(933, 699, "Family")}${txt(1130, 598, "Foyer")}${txt(1166, 793, "Living")}${txt(1283, 598, "Porch")}
  ${txt(575, 807, "Dining", "t11")}${txt(382, 808, "Bath", "t10")}${txt(460, 803, "Ldy", "t10")}${txt(525, 985, "Kit", "t11")}${txt(385, 984, "Family", "t10")}${txt(385, 1030, "Lounge", "t10")}${txt(880, 574, "Timber", "t9")}${txt(880, 602, "floor", "t9")}
  ${vtxt(112, 446, "9330")}${vtxt(74, 638, "15810")}${vtxt(112, 914, "6480")}${vtxt(150, 795, "2830")}${vtxt(188, 795, "2830")}${vtxt(150, 975, "3900")}${vtxt(188, 885, "1000")}${vtxt(188, 1015, "2172")}${vtxt(228, 914, "6000")}
  ${vtxt(1376, 356, "6230")}${vtxt(1376, 590, "1700")}${vtxt(1414, 552, "12960")}${vtxt(1376, 790, "5030")}${vtxt(1414, 1020, "2850")}${vtxt(920, 826, "3240")}${vtxt(882, 990, "6090")}${vtxt(920, 1012, "2610")}${vtxt(958, 1020, "2850")}
  ${txt(363, 1212, "2180", "t10")}${txt(448, 1212, "2190", "t10")}${txt(571, 1212, "4040", "t10")}${txt(736, 1212, "4000", "t10")}
  ${txt(385, 1271, "3300", "t10")}${txt(474, 1271, "1130", "t9")}${txt(573, 1271, "3900", "t10")}${txt(736, 1271, "4000", "t10")}
  ${txt(385, 1331, "3300", "t10")}${txt(461, 1331, "600", "t9")}${txt(562, 1331, "4500", "t10")}${txt(738, 1331, "4150", "t10")}
  ${txt(485, 1390, "8950", "t10")}${txt(743, 1390, "4400", "t10")}${txt(1064, 1390, "12270", "t10")}${txt(806, 1449, "25580", "t10")}
  ${txt(1077, 1298, "floor plan", "tbig")}
  ${txt(127, 1238, "Legend", "t8")}${txtL(106, 1282, "SMOKE DETECTOR", "t8")}${txtL(112, 1318, "EXHAUST FAN", "t8")}${txtL(112, 1355, "ROOF TURBINE LIGHTS", "t8")}
  ${txtL(1326, 1210, "AREAS", "t10")}${txtL(1326, 1268, "GRANNY FLAT:", "t9")}${txtL(1464, 1268, "50.06 m²", "t9")}${txtL(1336, 1298, "TOTAL:", "t9")}${txtL(1464, 1298, "25.30 m²", "t9")}
  ${["NOTES:", "  Figured dimensions to be used in preference", "  to scaling. Check all dimensions on", "  site.", "All work to comply with the Building Code", "Stormwater to existing drainage system", "  Smoke detectors to comply with AS", "  Termite protection to AS3660", "  All timber framing to AS1684"].map((s, i) => txtL(1328, 1372 + i * 18, s, "t6"))}
  ${txtL(508, 1573, "PROJECT", "t7")}${txtL(510, 1609, "PROPOSED GRANNY FLAT IN TERRACE", "t10w")}
  ${txtL(508, 1657, "CLIENT", "t7")}${txtL(510, 1693, "JOHN, GLORIA & LEONIE MELDRUM", "t11w")}
  ${txtL(912, 1573, "AT", "t7")}${txtL(925, 1611, "LOT 711", "t12w")}${txtL(1064, 1611, "D.P. Unregistered", "t12w")}${txtL(925, 1645, "170 HAKONE ROAD", "t12w")}${txtL(925, 1681, "WOONGARRAH,   2259", "t12w")}
  ${txtL(1317, 1580, "DATE", "t7")}${txtL(1360, 1580, "OCT, 20", "t10")}${txtL(1317, 1634, "SCALE", "t7")}${txtL(1410, 1634, "100", "t10")}${txtL(1317, 1690, "DRAWN", "t7")}${txtL(1388, 1692, "JY", "tsc")}
  ${txtL(1490, 1578, "JOB No", "t7")}${txtL(1492, 1626, "2   1", "t12w")}${txtL(1488, 1697, "COPY", "tsm")}
  ${txtL(214, 1592, "Building Design", "t7")}${["Suite 4, 12 Station St", "Wyong NSW 2259", "Ph: 02 4353 0000", "design@plan.com", "Lic No. 20356"].map((s, i) => txtL(276, 1618 + i * 15, s, "t6"))}
  <text class="bda" transform="translate(${PX(100)} ${PY(1702)}) rotate(-90)">BDA</text>
  ${txtL(60, 1762, "Y", "tax")}${txtL(142, 1892, "X", "tax")}${txtL(60, 1890, "Z", "tax")}
`;

/* ---------- data ---------- */
interface Row { n: string; lvl: number; d: string; kind?: string; open?: boolean; lock?: string; by?: string; hand?: boolean; q?: string; u?: string; r?: string; eye?: boolean; mark?: string; col: string; dim?: boolean; tall?: boolean; sel?: boolean; blueRate?: boolean; }
const ROWS: Row[] = [
  { n: "1", lvl: 0, d: "Prelims", kind: "pink", open: true, lock: "lockw", by: "Tim West", mark: "flag", col: "nb" },
  { n: "1.1", lvl: 1, d: "site e", q: "1.00", u: "ea", r: "2,500.00", col: "nb" },
  { n: "1.2", lvl: 1, d: "Project Insurances", hand: true, q: "1.00", u: "item", r: "2,000.00", col: "nb" },
  { n: "1.3", lvl: 1, d: "Hoardings and Fences", hand: true, q: "2.00", u: "item", r: "50.00", col: "nb" },
  { n: "1.5", lvl: 1, d: "Site Signage", hand: true, u: "item", r: "0.00", col: "nb" },
  { n: "1.5", lvl: 1, d: "Temp Electrical", hand: true, u: "item", r: "0.00", mark: "gtick", col: "nb" },
  { n: "1.6", lvl: 1, d: "Concrete", kind: "sky", open: true, hand: true, col: "nb" },
  { n: "1.7", lvl: 2, d: "", hand: true, u: "each", col: "nb" },
  { n: "2", lvl: 0, d: "CONCRETE WORKS", kind: "blue", open: true, lock: "openw", eye: true, col: "ng", sel: true },
  { n: "2.1", lvl: 1, d: "edge boards", r: "25.00", eye: true, col: "ng" },
  { n: "2.1", lvl: 1, d: "concrete finish", r: "5.00", eye: true, col: "ng" },
  { n: "2.3", lvl: 1, d: "100mm thick ground floor slab including subbase preparation Waffle Pod Class M - Supply and install incl Concrete, Formwork and Reinforcement (inclusive of folds in slab)", r: "185.00", eye: true, col: "ng", tall: true, blueRate: true },
  { n: "3", lvl: 0, d: "Brickwork", kind: "blue", open: true, lock: "userw", by: "Sarah Mullens", eye: true, col: "nr", dim: true },
  { n: "3.1", lvl: 1, d: "ext bricks", r: "50.00", eye: true, col: "nr", dim: true },
  { n: "4", lvl: 0, d: "Doors", kind: "blue", open: true, lock: "userw", by: "Alan Mighton", eye: true, col: "nr", dim: true },
  { n: "4.1", lvl: 1, d: "2040x820x35mm Door", r: "172.80", eye: true, col: "nr", dim: true, blueRate: true },
  { n: "4.2", lvl: 1, d: "2340x720x35mm Door", kind: "green", eye: true, col: "nr", dim: true },
  { n: "", lvl: 0, d: "", kind: "last", col: "nb" },
];

type MenuItem = "-" | { t: string; i?: string; off?: boolean; cls?: string; sub?: boolean };
const MENU: MenuItem[] = [
  { t: "Insert Item (Ctrl + I)", i: "insrow" }, { t: "Add Item (Ctrl + Shift + I)", i: "addrow" }, "-",
  { t: "Heading", i: "heading", off: true, cls: "checked" }, { t: "Item", i: "item", off: true }, "-",
  { t: "Unindent (Ctrl +<)", i: "mout", off: true }, { t: "Indent (Ctrl +>)", i: "min", off: true }, "-",
  { t: "Lock", i: "block", cls: "locki" }, "-",
  { t: "Cut", i: "cut", off: true }, { t: "Copy", i: "copy" }, { t: "Paste", i: "paste", off: true }, { t: "Paste Special", off: true, sub: true }, "-",
  { t: "Edit Ref Code", off: true }, "-",
  { t: "Delete row", i: "delx", off: true }, { t: "Clear cell", off: true }, "-",
  { t: "Expand" }, { t: "Expand all" }, { t: "Collapse" }, { t: "Collapse all" },
];

const big = (icon: string, label: unknown, arrow = false, tight = false) => html`
  <button class="big ${tight ? "tight" : ""}"><span class="bic">${ic(icon)}</span><span class="lbl">${label}</span>${arrow ? ic("caret") : nothing}</button>`;
const small = (items: [string, string][]) => html`<div class="smalls">${items.map(([i, t]) => html`<button class="small">${ic(i)}<span>${t}</span></button>`)}</div>`;
const group = (name: string, label: string, body: unknown) => html`<section class="group ${name}"><div class="gb">${body}</div><div class="gl">${label}</div></section>`;

@customElement("app-root")
export class AppRoot extends LitElement {
  static styles = css`
    :host { display: block; --ui: "Open Sans", "Noto Sans", sans-serif; --ta: "DejaVu Sans Condensed", "DejaVu Sans", "Noto Sans", sans-serif; }
    * { box-sizing: border-box; }
    button { font: inherit; color: inherit; background: none; border: 0; padding: 0; margin: 0; text-align: left; }
    .ic { display: block; flex: none; overflow: visible; }
    .app { display: grid; grid-template-rows: 75px 115px 21px 2px minmax(0, 1fr); height: 100vh; background: #f0f0f0; font: 12px/16px var(--ui); color: #333; overflow: hidden; }

    /* title bar */
    .title { background: #0072c6; display: flex; flex-direction: column; justify-content: space-between; border-bottom: 1px solid #4a97d3; color: #fff; }
    .trow { display: flex; justify-content: space-between; padding: 5px 0 0 9px; }
    .qat { display: flex; align-items: center; height: 27px; }
    .qat .sep { width: 1px; height: 18px; background: #6aa9dc; margin: 0 6px 0 4px; }
    .qb { display: grid; place-items: center; width: 30px; height: 27px; }
    .qb.first { width: 24px; margin-right: 13px; }
    .qb.on { background: #00508f; }
    .qb.car { width: 14px; }
    .qb.hist { width: 21px; }
    .wc { display: flex; align-items: center; gap: 39px; padding-right: 21px; }
    .tabs { display: flex; padding-left: 2px; }
    .tabs button { font-size: 13px; line-height: 26px; padding: 0 12px 0 11px; }
    .tabs .on { background: #f0f0f0; color: #222; }

    /* ribbon */
    .ribbon { display: grid; grid-template-columns: 227px 300px 299px 161px 195px 430px 74px 158px 123px minmax(0, 1fr); border-bottom: 1px solid #c3c3c3; padding: 11px 0 7px; }
    .group { border-right: 1px solid #d2d2d2; display: flex; flex-direction: column; justify-content: space-between; }
    .gb { display: grid; align-items: start; }
    .gl { text-align: center; }
    .edit .gl { padding-right: 46px; }
    .insert .gl { padding-right: 46px; }
    .big { display: flex; flex-direction: column; align-items: center; }
    .bic { display: grid; place-items: center; height: 42px; }
    .big .lbl { text-align: center; line-height: 17px; white-space: nowrap; }
    .big .ic:last-child { margin-top: 2px; }
    .big.tight .bic { height: 34px; }
    .big.tight .bic + .lbl { margin-top: 4px; line-height: 17px; }
    .smalls { display: flex; flex-direction: column; padding-top: 1px; }
    .small { display: flex; align-items: center; gap: 6px; height: 23px; white-space: nowrap; }
    .edit .gb { grid-template-columns: 54px 66px 50px 50px; padding-left: 2px; }
    .takeoff .gb { grid-template-columns: 64px 66px 100px 60px; padding-left: 1px; }
    .takeoff .big + .smalls { padding-left: 11px; }
    .draw .gb { grid-template-columns: 56px 1fr; padding-left: 1px; }
    .draw .ortho { display: flex; justify-content: space-between; align-items: center; padding-right: 12px; }
    .tools .gb { grid-template-columns: 71px 1fr; padding-left: 11px; }
    .insert .gb { grid-template-columns: 52px 54px 58px 70px 66px 1fr; padding-left: 12px; }
    .insert .smalls { padding-left: 4px; }
    .revs .gb { justify-items: center; }
    .cubit .gb { grid-template-columns: 48px 1fr; padding-left: 5px; column-gap: 3px; }
    .job .gb { grid-template-columns: 54px 56px; padding-left: 9px; }
    .fmt .gb { grid-template-columns: 51px 93px 34px 92px; column-gap: 5px; row-gap: 14px; padding: 1px 0 0 1px; align-items: center; }
    .fmt label { text-align: right; }
    .swatch { display: grid; grid-template-columns: 1fr 22px; height: 23px; border: 1px solid #a5a5a5; background: #fff; width: 100%; }
    .swatch > span { display: grid; place-items: center; }
    .swatch > span:last-child { border-left: 1px solid #a5a5a5; background: #f0f0f0; }
    .yel { background: #ede981; outline: 1px solid #8d8a4d; }
    .swatch > .dashl { display: flex; justify-content: center; gap: 14px; align-items: center; }
    .dashl i { width: 23px; height: 6px; background: #000; }
    .thick i { width: 60px; height: 9px; background: #000; }

    /* formula bar */
    .fx { display: grid; grid-template-columns: 341px 28px 28px 1fr; font: 12px/20px var(--ta); color: #555; margin-right: 2px; }
    .fx .left { display: flex; align-items: center; padding-left: 35px; }
    .fx .left .ref { margin-left: 65px; margin-right: 96px; white-space: nowrap; }
    .fx .left .ic { margin-left: 38px; }
    .fx em { font: italic 18px/20px "Liberation Serif", serif; }
    .fx button { display: grid; place-items: center; border: 1px solid; border-color: #fafafa #777 #777 #fafafa; background: #eee; }
    .fx input { border: 0; border-left: 1px solid #888; padding: 0 6px; font: 12px var(--ta); color: #444; outline: 0; min-width: 0; background: #fff; }

    /* panels */
    .main { display: grid; grid-template-columns: minmax(0, 842fr) minmax(0, 824fr) minmax(0, 519fr); column-gap: 5px; padding: 0 2px 0 3px; min-height: 0; font: 12px/15px var(--ta); color: #444; }
    .main > * { min-height: 0; }
    .panel { border: 1px solid #b9b9b9; display: flex; flex-direction: column; min-height: 0; background: #f0f0f0; }
    h2 { font: 15px/20px var(--ta); margin: 0; color: #444; }
    table { border-collapse: separate; border-spacing: 0; table-layout: fixed; width: 100%; background: #fff; }
    th, td { font-weight: 400; text-align: left; padding: 0; overflow: hidden; white-space: nowrap; }
    th { background: #f0f0f0; border-right: 1px solid #a9a9a9; border-bottom: 1px solid #a0a0a0; padding: 0 4px; }
    td { border-right: 1px solid #d0d0d0; border-bottom: 1px solid #d0d0d0; padding: 0 4px; }
    .est { position: relative; border-bottom: 0; padding: 0 2px 0 1px; }
    .est .head { display: flex; justify-content: space-between; height: 42px; align-items: center; padding: 0 13px; }
    .etabs { display: flex; border-bottom: 1px solid #b9b9b9; padding-left: 3px; }
    .etabs button { line-height: 20px; padding: 5px 5px 3px; min-width: 62px; }
    .etabs .on { background: #d9d9d9; }
    .tb { display: flex; align-items: center; height: 34px; border-bottom: 1px solid #b9b9b9; padding-left: 1px; flex: none; }
    .tb button { display: grid; place-items: center; width: 30px; height: 28px; }
    .tb .arr { width: 21px; }
    .tb .on { background: #c4c4c4; }
    .tb i { width: 1px; height: 26px; background: #cfcfcf; margin: 0 3px; }
    .gridbox { flex: 459 1 0; min-height: 0; display: grid; grid-template-columns: minmax(0, 1fr) 20px; margin: 0 1px 0 2px; }
    .gridbox table { height: 100%; }
    .etable th { height: 24px; }
    .etable th:nth-last-child(2) { padding: 0 0 0 3px; }
    .etable td { height: 21px; }
    .etable tr.tall td { height: 63px; }
    .etable tr.last td { height: 19px; }
    .etable .num { background: #f0f0f0; border-right: 1px solid #a9a9a9; border-bottom: 0; font: 13px/16px var(--ui); padding-left: 10px; }
    .gut { border: 0; background: #fff; padding: 0 3px 0 0; }
    .gut .ic { margin-left: auto; }
    .etable td.desc { border-left: 1px solid #d0d0d0; padding-left: 5px; padding-right: 0; }
    .etable .tall td.desc { white-space: normal; padding-right: 12px; }
    .flexd { display: flex; align-items: center; gap: 6px; }
    .etable th.seg { font-family: var(--ui); color: #222; padding-right: 0; }
    .nb { color: #1f76bd; } .ng { color: #2f8a3f; } .nr { color: #b5191c; }
    .top .num { font-weight: 700; }
    .pink td:not(.num):not(.gut) { background: #ff91fa; border-color: #e6a6e2; }
    .blue td:not(.num):not(.gut) { background: #69aadd; border-color: #b9d3e8; }
    .sky td:not(.num):not(.gut) { background: #dbeffc; }
    .green td:not(.num):not(.gut) { background: #ddfddd; border-bottom-color: #b6d9b6; }
    .pink .desc, .blue .desc { font-weight: 700; color: #fff; }
    .sky .desc { font-weight: 700; text-decoration: underline; }
    .sky .num { font-weight: 700; text-decoration: underline; }
    .by { font-family: var(--ui); color: #fff; }
    .dim .desc { color: #d8d8d8; } .dim.blue .desc { color: #a6cbea; } .dim.green .desc { color: #c0dcc0; }
    .dim .by { color: #cfe3f4; }
    .dim .rate { color: #d8d8d8; }
    .blue .eye .ic { opacity: .5; }
    .dim .eye .ic { opacity: .25; }
    .r { text-align: right; }
    .etable .rate.bl { color: #2626ff; } .etable .dim .rate.bl { color: #cfcffc; }
    .etable .sel { box-shadow: inset 0 0 0 2px #000; }
    .ctr .ic { margin: 0 auto; } .ctr { padding: 0; }
    .etable td:nth-last-child(2), .etable th:nth-last-child(2) { border-right: 2px solid #a9a9a9; }
    .vs { display: flex; flex-direction: column; background: #e9e9e9; }
    .vs .b, .hs .b { display: grid; place-items: center; width: 20px; height: 20px; background: #f0f0f0; flex: none; }
    .vs .hd { height: 24px; border-bottom: 1px solid #b9b9b9; background: #f0f0f0; flex: none; }
    .vs .th { flex: 1; background: #cdcdcd; }
    .vs .b.lo { height: 42px; padding-top: 20px; }
    .hs { display: flex; height: 20px; background: #e9e9e9; border-bottom: 1px solid #b9b9b9; margin: 0 1px 0 2px; flex: none; }
    .hs .th { background: #cdcdcd; width: 73%; }
    .hs .b:last-child { margin-left: auto; margin-right: 18px; }
    .crumb { display: flex; align-items: center; height: 41px; border-bottom: 1px solid #c5c5c5; padding: 0 9px 0 10px; flex: none; }
    .crumb .ic + .ic { margin-left: 12px; }
    .crumb a { color: inherit; text-decoration: none; margin: 0 14px; }
    .crumb .tot { margin-left: auto; margin-right: 17px; color: #222; }
    .crumb b { color: #000; }
    .split { display: grid; place-items: center; height: 16px; flex: none; }
    .ctabs { display: grid; grid-template-columns: 144px auto 1fr; height: 29px; flex: none; }
    .ctabs button, .ctabs span { display: flex; align-items: center; gap: 4px; border-bottom: 1px solid #b9b9b9; }
    .ctabs .on { border: 1px solid #b9b9b9; border-bottom: 0; padding-left: 12px; color: #222; }
    .ctabs .ra { padding: 0 12px; }
    .ctabs span { justify-content: flex-end; padding-right: 3px; }
    .tb.calc { height: 32px; border: 0; padding-left: 3px; }
    .cgrid { flex: 238 1 0; min-height: 0; background: #fff; margin: 0 1px 0 2px; border: 1px solid #a9a9a9; border-width: 1px 0 2px; overflow: hidden; }
    .cgrid th { height: 23px; } .cgrid td { height: 22px; line-height: 14px; }
    .cgrid th:first-child, .cgrid .g0 { background: #f0f0f0; border-right: 1px solid #a9a9a9; border-bottom: 0; }
    .cgrid th:first-child { border-bottom: 1px solid #a0a0a0; }
    .cgrid .g0 { padding-left: 9px; }
    .cgrid td.desc { border-left: 1px solid #d0d0d0; padding-left: 6px; }
    .cgrid td:nth-last-child(2), .cgrid th:nth-last-child(2) { border-right: 2px solid #a9a9a9; }
    .cgrid .box { padding: 0; }
    .cgrid input { display: block; appearance: none; width: 15px; height: 15px; border: 1px solid #999; background: #fff; margin: 0 auto; }
    .foot { height: 3px; flex: none; }

    .tip { position: absolute; left: 371px; top: 139px; background: #fff; border: 1px solid #999; box-shadow: 3px 3px 3px rgba(0,0,0,.35); padding: 12px 10px; font: 13px/16px var(--ui); color: #222; white-space: nowrap; }
    .menu { position: absolute; left: 457px; top: 315px; width: 226px; background: #fff; border: 1px solid #b5b5b5; box-shadow: 2px 3px 5px rgba(0,0,0,.2); padding: 1px 0; color: #444; font-size: 13px; }
    .mi { display: grid; grid-template-columns: 39px 1fr auto; align-items: center; height: 27px; width: 100%; padding: 0 14px 0 0; }
    .mi .mic { display: grid; place-items: center; width: 25px; height: 25px; margin-left: 4px; }
    .mi.off { color: #a2a2a2; }
    .mi.checked .mic { background: #b9b9b9; }
    .mi.locki { height: 38px; font: 13px/16px var(--ui); color: #222; }
    .msep { height: 1px; margin: 2px 8px 2px 36px; background: #dcdcdc; }

    /* viewport */
    .vp { display: flex; flex-direction: column; padding-top: 2px; }
    .vtab { background: #666; color: #f2f2f2; line-height: 24px; padding: 1px 0 0; width: 76px; text-align: center; }
    .vbody { border: 1px solid #b9b9b9; border-top: 2px solid #666; border-bottom: 0; flex: 1; min-height: 0; display: flex; flex-direction: column; padding: 4px 4px 0 3px; }
    .vrow { display: grid; grid-template-columns: 1fr 87px; column-gap: 7px; height: 22px; margin-bottom: 8px; }
    .combo { display: grid; grid-template-columns: minmax(0, 1fr) 19px; border: 1px solid #a5a5a5; background: #fff; }
    .combo select { grid-area: 1 / 1 / 2 / 3; appearance: none; border: 0; background: transparent; font: 12px var(--ta); color: #444; padding: 0 3px; outline: 0; min-width: 0; }
    .combo .ar { grid-area: 1 / 2; display: grid; place-items: center; border-left: 1px solid #a5a5a5; background: #f0f0f0; pointer-events: none; }
    .ins { display: flex; align-items: center; gap: 15px; border: 1px solid #b5b5b5; padding-left: 3px; }
    .canvas { position: relative; flex: 1; min-height: 0; background: #fff; border: 2px solid #8f8f8f; border-right-width: 1px; overflow: hidden; }
    .canvas > svg { display: block; width: 100%; height: 100%; }
    .nav { position: absolute; top: 4px; left: 0; right: 8px; display: flex; justify-content: center; gap: 4px; }
    .nav button { display: grid; place-items: center; width: 38px; height: 38px; }
    .vfoot { height: 8px; flex: none; display: flex; }
    .vfoot span { width: 20%; border-right: 1px solid #b9b9b9; background: #e9e9e9; }
    .room { fill: #ffe6d0; stroke: none; }
    .lines path, .lines ellipse { vector-effect: non-scaling-stroke; }
    .out { fill: none; stroke: #ff8200; stroke-width: 3.5px; }
    .med { fill: none; stroke: #444; stroke-width: 1px; }
    .heavy { fill: none; stroke: #3a3a3a; stroke-width: 2px; }
    .thin { stroke: #444; stroke-width: 1px; } path.thin:not([fill]) { fill: none; }
    .dash { fill: none; stroke: #555; stroke-width: 1px; stroke-dasharray: 7 4; }
    .spk { fill: none; stroke: #333; stroke-width: 1.3px; }
    .dim, .box { fill: none; stroke: #3c3c3c; stroke-width: 1px; }
    .win { fill: none; stroke: #ffe6d0; stroke-width: 2px; }
    .mag, .mag2 { fill: none; stroke: #ff1cff; stroke-width: 1.5px; } .mag2 { stroke-width: 2px; }
    .grn { fill: none; stroke: #62d53a; stroke-width: 1.5px; }
    .canvas text { font-family: Lato, "Open Sans", sans-serif; fill: #3c3c3c; white-space: pre; }
    .t6 { font-size: 5px; } .t7, .t8 { font-size: 6px; } .t9 { font-size: 8px; } .t10 { font-size: 9px; } .t11 { font-size: 11px; } .t12 { font-size: 12px; }
    .t10w { font-size: 10px; font-weight: 300; } .t11w { font-size: 11px; font-weight: 300; } .t12w { font-size: 12px; font-weight: 300; }
    .tbig { font-size: 28px; font-weight: 300; } .tsc { font-size: 13px; font-style: italic; } .tsm { font-size: 11px; font-style: italic; } .tax { font-size: 14px; font-weight: 300; }
    .canvas .bda { font-weight: 900; font-size: 16px; fill: #fff; }

    /* right column */
    .right { display: grid; grid-template-rows: minmax(0, 594fr) minmax(0, 342fr); row-gap: 7px; padding-left: 1px; }
    .rhead { display: flex; align-items: center; height: 40px; padding: 0 14px 0 12px; flex: none; }
    .rhead h2 { flex: 1; }
    .rhead button { margin-left: 10px; }
    .stb { display: flex; padding: 3px 2px; flex: none; }
    .stb button { display: grid; place-items: center; width: 30px; height: 27px; }
    .stb .on { background: #c4c4c4; }
    .sbox { flex: 1; min-height: 0; background: #fff; border: 1px solid #b0b0b0; margin: 0 2px 1px 1px; overflow: hidden; }
    .sbox th { height: 23px; } .sbox td { height: 22px; }
    .sbox td.desc { border-left: 1px solid #d0d0d0; padding-left: 4px; }
    .sbox th .flexd { justify-content: space-between; padding-right: 2px; }
    .sbox td:nth-last-child(2), .sbox th:nth-last-child(2) { border-right: 2px solid #a9a9a9; }
    .sbox .lk { display: grid; place-items: center; width: 21px; height: 21px; border: 1px solid #a9a9a9; background: #f0f0f0; margin: 0 auto; }
    .sbox .b .desc { font-weight: 700; }
    .det { overflow: hidden; border-bottom: 0; }
    .det .ti { padding-left: 3px; line-height: 16px; margin-top: 4px; flex: none; }
    .frow { display: grid; grid-template-columns: 16px 115px 1fr 14px; align-items: center; column-gap: 7px; padding: 0 8px 0 5px; height: 22px; flex: none; }
    .frow .combo { background: #f0f0f0; height: 22px; }
    .frow input { height: 22px; border: 1px solid #a5a5a5; min-width: 0; width: calc(100% - 3px); }
    .dbody { flex: 1; min-height: 0; display: grid; grid-template-columns: minmax(0, 1fr) 20px; column-gap: 5px; padding-left: 4px; margin-top: 3px; overflow: hidden; }
    .dcol { overflow: hidden; }
    .gen { display: flex; justify-content: space-between; align-items: center; height: 40px; padding: 0 8px 0 3px; }
    .dtab { border: 1px solid #b0b0b0; border-width: 1px 1px 0; }
    .dtab th { height: 22px; } .dtab td { height: 23px; color: #333; }
    .dtab td:last-child, .dtab th:last-child { border-right: 0; }
    .dtab .bl { color: #1414ff; }
    .dtab .it td { font-style: italic; color: #9a9a9a; }
    .vs .dth { height: 93px; background: #cdcdcd; }
  `;

  private row(r: Row) {
    const cls = `${r.kind ?? ""} ${r.lvl === 0 ? "top" : ""} ${r.dim ? "dim" : ""} ${r.tall ? "tall" : ""}`;
    const body = r.mark ? html`<span class="flexd">${ic(r.mark)}<span>${r.d}</span></span>` : r.d;
    return html`<tr class=${cls}>
      <td class="num ${r.col}">${r.n}</td>
      <td class="gut" colspan=${r.lvl + 1}>${r.open ? ic("corner") : nothing}</td>
      <td class="desc" colspan=${3 - r.lvl}>${body}</td>
      <td class="ctr">${r.lock ? ic(r.lock) : nothing}</td>
      <td class="by ${r.sel ? "sel" : ""}">${r.by ?? nothing}</td>
      <td class="ctr">${r.hand ? ic("hand") : nothing}</td>
      <td class="r">${r.q ?? nothing}</td><td>${r.u ?? nothing}</td>
      <td class="r rate ${r.blueRate ? "bl" : ""}">${r.r ?? nothing}</td><td></td>
      <td class="ctr eye">${r.eye ? ic("eye") : nothing}</td>
    </tr>`;
  }

  private tool(i: string, label: string, cls = "") {
    return html`<button class=${cls} aria-label=${label}>${ic(i)}</button>`;
  }

  private estimate() {
    return html`<section class="panel est">
      <div class="head"><h2>Estimate</h2><button aria-label="Pin">${ic("pin", 10, 11)}</button></div>
      <div class="etabs"><button class="on">Estimate</button><button>Grouped Views</button></div>
      <div class="tb">
        ${this.tool("list1", "All levels")}${this.tool("list2", "Top level")}${this.tool("list3", "Current level")}<i></i>
        ${this.tool("tools", "Tools")}${this.tool("caretg", "Tool options", "arr")}${this.tool("prev", "Previous")}${this.tool("next", "Next")}<i></i>
        ${this.tool("tbltop", "Heading")}${this.tool("caretg", "Heading options", "arr")}<i></i>
        ${this.tool("tblhead", "Insert above")}${this.tool("tblfoot", "Insert below")}<i></i>
        ${this.tool("trash", "Delete")}<i></i>${this.tool("outd", "Unindent")}${this.tool("ind", "Indent")}<i></i>
        ${this.tool("tbltop", "Header")}${this.tool("tblmid", "Row", "on")}<i></i>${this.tool("search", "Search")}<i></i>
        ${this.tool("flagp", "Previous flag")}${this.tool("flagn", "Next flag")}<i></i>${this.tool("lock", "Lock")}<i></i>
      </div>
      <div class="gridbox">
        <table class="etable">
          <colgroup><col style="width:34px"><col style="width:17px"><col style="width:16px"><col style="width:16px"><col><col style="width:34px"><col style="width:155px"><col style="width:23px"><col style="width:68px"><col style="width:46px"><col style="width:69px"><col style="width:42px"><col style="width:23px"></colgroup>
          <thead><tr><th></th><th colspan="4">Description</th><th class="seg">Lock</th><th class="seg">Locked By</th><th>...</th><th>Quantity</th><th>Unit</th><th>Rate</th><th>Markup</th><th></th></tr></thead>
          <tbody>${ROWS.map((r) => this.row(r))}</tbody>
        </table>
        <div class="vs"><div class="hd"></div><div class="b">${ic("up")}</div><div class="th"></div><div class="b lo">${ic("down")}</div></div>
      </div>
      <div class="hs"><div class="b">${ic("left")}</div><div class="th"></div><div class="b">${ic("right")}</div></div>
      <nav class="crumb">${ic("tree")}${ic("play")}<a href="#doors">Doors</a>${ic("play")}<a href="#door">2340x720x35mm Door</a><span class="tot">Total:</span><b>27,641.00</b></nav>
      <div class="split">${ic("down")}</div>
      <div class="ctabs"><button class="on">${ic("calc")}Calculation Sheet</button><button class="ra">${ic("rate")}Rate Sheet</button><span>${ic("cols")}</span></div>
      <div class="tb calc">${this.tool("insrowg", "Insert row")}${this.tool("addrowg", "Add row")}</div>
      <div class="cgrid">
        <table>
          <colgroup><col style="width:22px"><col style="width:16px"><col><col style="width:100px"><col style="width:23px"><col style="width:94px"><col style="width:23px"></colgroup>
          <thead><tr><th></th><th colspan="2">Description</th><th>Quantity</th><th class="r">-</th><th>Total</th><th></th></tr></thead>
          <tbody>${[0, 1, 2, 3].map((i) => html`<tr><td class="g0">${i === 0 ? ic("play") : nothing}</td><td class="gut"></td><td class="desc">2340x720x35mm Door</td><td class="r">1</td><td class="box"><input type="checkbox" aria-label="Subtract"></td><td class="r">1</td><td class="ctr">${ic("eye")}</td></tr>`)}
          <tr><td class="g0"></td><td class="gut"></td><td class="desc"></td><td></td><td></td><td></td><td></td></tr></tbody>
        </table>
      </div>
      <div class="foot"></div>
      <div class="tip" role="tooltip">Locked by Tim West</div>
      <div class="menu" role="menu">
        ${MENU.map((m) => m === "-" ? html`<div class="msep"></div>` : html`<button role="menuitem" class="mi ${m.off ? "off" : ""} ${m.cls ?? ""}"><span class="mic">${m.i ? ic(m.i) : nothing}</span><span>${m.t}</span>${m.sub ? ic("play") : nothing}</button>`)}
      </div>
    </section>`;
  }

  private paneButtons() {
    return html`<button aria-label="Maximise">${ic("maxw")}</button><button aria-label="Pin">${ic("pin", 10, 10)}</button><button aria-label="Close">${ic("xw")}</button>`;
  }

  render() {
    const props: [string, string, string?][] = [["Description", "2340x720x35mm Door"], ["Result Type", "Door Counts", "bl"], ["Quantity", "4", "bl"], ["Factor", ""], ["No.", ""], ["Conversion", ""], ["Wastage", ""], ["Aggregate Quantity", "4", "it"], ["Unit", "each"]];
    return html`<div class="app">
      <header class="title">
        <div class="trow">
          <div class="qat">
            <span class="qb first">${ic("logo")}</span><button class="qb" aria-label="Home">${ic("appwin")}</button><span class="sep"></span>
            <button class="qb on" aria-label="2D">${ic("layers")}</button><button class="qb" aria-label="3D">${ic("cubes")}</button><span class="sep"></span>
            <button class="qb" aria-label="Windows">${ic("stack")}</button><button class="qb" aria-label="Launch">${ic("rocket")}</button>
            <button class="qb" aria-label="Grid">${ic("gridw")}</button><button class="qb" aria-label="Edit">${ic("pencil")}</button><button class="qb car" aria-label="More">${ic("caretw")}</button>
            <span class="sep"></span><button class="qb hist" aria-label="Undo">${ic("undow")}</button><button class="qb hist" aria-label="Redo">${ic("redow")}</button><button class="qb car" aria-label="Customise">${ic("caretq")}</button>
          </div>
          <div class="wc"><button aria-label="Minimise">${ic("wmin")}</button><button aria-label="Maximise">${ic("wmax")}</button><button aria-label="Close">${ic("wclose")}</button></div>
        </div>
        <nav class="tabs">${["Job", "Home", "Plans", "View", "Data", "Configuration", "Help"].map((t) => html`<button class=${t === "Home" ? "on" : ""}>${t}</button>`)}</nav>
      </header>

      <div class="ribbon">
        ${group("edit", "Edit", html`${big("select", "Select")}${small([["undo", "Undo"], ["redo", "Redo"], ["del", "Delete"]])}${big("refresh", html`Refresh<br>Job`, false, true)}${big("rates", html`Adjust<br>Rates`, false, true)}`)}
        ${group("takeoff", "Takeoff", html`${big("polyline", "Polyline")}${big("auto", "Auto-Select")}${small([["rect", "Rectangle"], ["ellipse", "Elipse"], ["pick", "Pick Lines"]])}${small([["line", "Line"], ["count", "Count"], ["text", "Text"]])}`)}
        ${group("fmt", "Format", html`
          <label for="col">Colour:</label><button id="col" class="swatch"><span class="yel"></span><span>${ic("caretg")}</span></button>
          <label for="lin">Line:</label><button id="lin" class="swatch"><span class="dashl"><i></i><i></i></span><span>${ic("caretg")}</span></button>
          <label for="fil">Fill:</label><button id="fil" class="swatch"><span>${ic("hatch")}</span><span>${ic("caretg")}</span></button>
          <label for="siz">Size:</label><button id="siz" class="swatch"><span class="thick"><i></i></span><span>${ic("caretg")}</span></button>`)}
        ${group("draw", "Drawing", html`${big("ruler", "Ruler")}<div class="smalls"><button class="small">${ic("phantom")}<span>Phantom</span></button><div class="ortho"><button class="small">${ic("ortho")}<span>Ortho</span></button>${ic("caret")}</div></div>`)}
        ${group("tools", "Tools", html`${small([["finish", "Finish"], ["close", "Close"], ["cancel", "Cancel"]])}${small([["editsel", "Edit on Select"], ["addpt", "Add Point"], ["rempt", "Remove Point"]])}`)}
        ${group("insert", "Insert", html`${big("windows", "Windows", true)}${big("doors", "Doors", true)}${big("library", html`Openings<br>Library`)}${big("prices", "Price Lists")}${big("consts", "Constants")}${small([["page", "Templates"], ["excel", "Excel"], ["variation", "Variation Item"]])}`)}
        ${group("revs", "Revisions", big("begin", "Begin"))}
        ${group("cubit", "Cubit Select", html`${big("send", "Send")}${small([["receive", "Receive"], ["open", "Open"], ["hide", "Hide Picked"]])}`)}
        ${group("job", "Job Access", html`${big("person", "Exclusive")}${big("people", "Shared")}`)}
      </div>

      <div class="fx">
        <div class="left"><span>Item</span>${ic("copies")}<span class="ref">CB3.Qty</span><em>fx</em></div>
        <button aria-label="Reject">${ic("xbig", 14, 14)}</button><button aria-label="Accept">${ic("tick", 14, 14)}</button>
        <input aria-label="Formula" value="4">
      </div>
      <div></div>

      <main class="main">
        ${this.estimate()}
        <section class="vp">
          <button class="vtab">Viewport</button>
          <div class="vbody">
            <div class="vrow">
              <div class="combo"><select aria-label="Page"><option>2-Floor plan, page 1</option></select><span class="ar">${ic("caretg")}</span></div>
              <button class="ins">${ic("houseadd")}Insert</button>
            </div>
            <div class="canvas">
              <svg viewBox="0 0 812 867" preserveAspectRatio="xMinYMin meet" role="img" aria-label="Floor plan">${plan}</svg>
              <div class="nav">${[["orbit", "Orbit"], ["pickzoom", "Zoom to selection"], ["zoomwin", "Zoom window"], ["zoom", "Zoom"], ["pan", "Pan"], ["rotate", "Rotate"], ["extents", "Zoom extents"]].map(([i, l]) => html`<button aria-label=${l}>${ic(i)}</button>`)}</div>
            </div>
            <div class="vfoot"><span></span></div>
          </div>
        </section>

        <div class="right">
          <section class="panel">
            <div class="rhead"><h2>Shapes</h2>${this.paneButtons()}</div>
            <div class="stb"><button class="on" aria-label="Drawing shapes">${ic("house")}</button><button aria-label="Building shapes">${ic("build")}</button></div>
            <div class="sbox">
              <table>
                <colgroup><col style="width:16px"><col style="width:16px"><col><col style="width:59px"><col style="width:33px"><col style="width:25px"><col style="width:34px"></colgroup>
                <thead><tr><th colspan="3"><span class="flexd">Description${ic("sort")}</span></th><th>Quantity</th><th>Unit</th><th></th><th></th></tr></thead>
                <tbody>
                  <tr class="b"><td class="gut">${ic("corner")}</td><td class="desc" colspan="2">2-Floor plan, page 1</td><td></td><td></td><td></td><td class="ctr">${ic("eye")}</td></tr>
                  ${[["Shape 1", 1, 1], ["Doors", 1, 0], ["Windows", 0, 0], ["Text", 0, 0]].map(([t, e, l]) => html`<tr><td class="gut" colspan="2">${e ? ic("branch") : nothing}</td><td class="desc">${t}</td><td></td><td></td><td class="ctr">${l ? html`<button class="lk" aria-label="Linked">${ic("link")}</button>` : nothing}</td><td class="ctr">${e ? ic("oval") : nothing}</td></tr>`)}
                </tbody>
              </table>
            </div>
          </section>
          <section class="panel det">
            <div class="rhead"><h2>Details</h2>${this.paneButtons()}</div>
            <div class="ti">Trade item: 2340x720x35mm Door</div>
            <div class="frow">${ic("filter")}<div class="combo"><select aria-label="Filter"><option>All</option></select><span class="ar">${ic("caretg")}</span></div><input aria-label="Search properties"><button aria-label="Clear">${ic("redx")}</button></div>
            <div class="dbody">
              <div class="dcol">
                <div class="gen"><h2>General</h2>${ic("up", 12, 9)}</div>
                <table class="dtab">
                  <thead><tr><th>Property</th><th>Value</th></tr></thead>
                  <tbody>${props.map(([k, v, c]) => html`<tr class=${c === "it" ? "it" : ""}><td>${k}</td><td class=${c === "bl" ? "bl" : ""}>${v}</td></tr>`)}</tbody>
                </table>
              </div>
              <div class="vs"><div class="b">${ic("up")}</div><div class="dth"></div></div>
            </div>
          </section>
        </div>
      </main>
    </div>`;
  }
}
